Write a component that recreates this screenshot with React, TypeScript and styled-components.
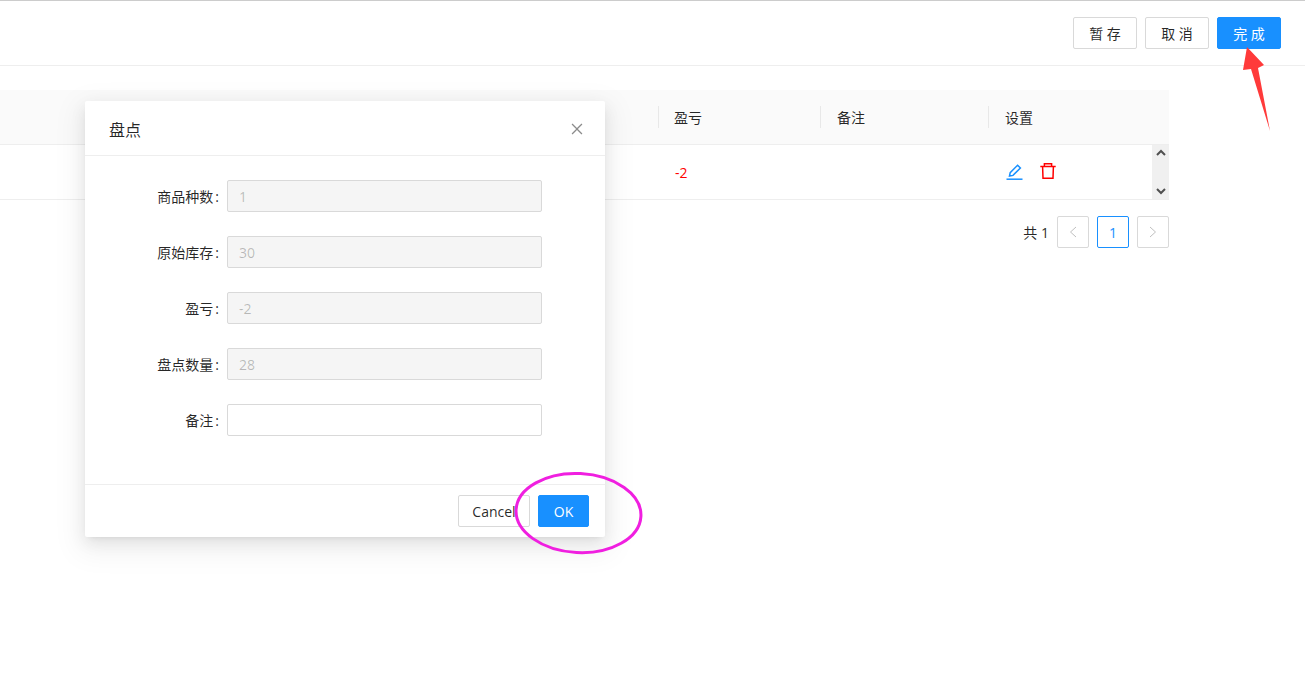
import React from 'react';
import styled, { createGlobalStyle } from 'styled-components';
import { AiOutlineClose } from 'react-icons/ai';

const GlobalStyle = createGlobalStyle`
  html, body {
    margin: 0;
    padding: 0;
    height: 100%;
    background: #fff;
    overflow: hidden;
  }
  body {
    font-family: "Open Sans", "Noto Sans CJK SC", sans-serif;
    font-size: 14px;
    color: rgba(0, 0, 0, 0.85);
  }
  * {
    box-sizing: border-box;
  }
`;

const Page = styled.div`
  position: relative;
  width: 1305px;
  height: 692px;
  overflow: hidden;
  border-top: 1px solid #ccc;
`;

const TopBar = styled.div`
  display: flex;
  justify-content: flex-end;
  gap: 8px;
  height: 65px;
  padding: 16px 24px 0 0;
  border-bottom: 1px solid #eee;
`;

const Button = styled.button<{ $primary?: boolean; $wide?: number }>`
  width: ${(p) => p.$wide || 64}px;
  height: 32px;
  padding: 0;
  font: inherit;
  border-radius: 2px;
  border: 1px solid ${(p) => (p.$primary ? '#1890ff' : '#d9d9d9')};
  background: ${(p) => (p.$primary ? '#1890ff' : '#fff')};
  color: ${(p) => (p.$primary ? '#fff' : 'rgba(0, 0, 0, 0.85)')};
`;

const Content = styled.div`
  width: 1169px;
  padding-top: 24px;
`;

const HeadRow = styled.div`
  display: grid;
  grid-template-columns: 658px 162px 168px 181px;
  height: 55px;
  align-items: center;
  background: #fafafa;
  border-bottom: 1px solid #eee;
`;

const HeadCell = styled.div<{ $plain?: boolean; $indent?: number }>`
  height: 22px;
  line-height: 24px;
  padding-left: ${(p) => p.$indent || 16}px;
  border-left: ${(p) => (p.$plain ? 'none' : '1px solid #e8e8e8')};
`;

const BodyRow = styled.div`
  display: grid;
  grid-template-columns: 659px 162px 168px 163px 17px;
  height: 55px;
  border-bottom: 1px solid #eee;
`;

const BodyCell = styled.div`
  display: flex;
  align-items: center;
  padding-left: 16px;
`;

const ActionIcons = styled.div`
  display: flex;
  align-items: center;
  gap: 17px;
  margin: 0 0 2px 1px;
`;

const LossText = styled.span`
  color: #f00;
  font-size: 14px;
`;

const ScrollTrack = styled.div`
  display: flex;
  flex-direction: column;
  justify-content: space-between;
  align-items: center;
  height: 54px;
  padding: 4px 0;
  background: #f0f0f0;
`;

const Pager = styled.div`
  display: flex;
  justify-content: flex-end;
  align-items: center;
  gap: 8px;
  margin-top: 16px;
`;

const PagerItem = styled.div<{ $active?: boolean }>`
  display: flex;
  align-items: center;
  justify-content: center;
  width: 32px;
  height: 32px;
  border-radius: 2px;
  border: 1px solid ${(p) => (p.$active ? '#1890ff' : '#d9d9d9')};
  color: ${(p) => (p.$active ? '#1890ff' : '#bfbfbf')};
  font-size: 14px;
`;

const Modal = styled.div`
  position: absolute;
  left: 85px;
  top: 100px;
  width: 520px;
  height: 436px;
  display: flex;
  flex-direction: column;
  background: #fff;
  border-radius: 2px;
  box-shadow: 0 3px 6px -4px rgba(0, 0, 0, 0.12), 0 6px 16px 0 rgba(0, 0, 0, 0.08),
    0 9px 28px 8px rgba(0, 0, 0, 0.05);
`;

const ModalHeader = styled.div`
  display: flex;
  justify-content: space-between;
  align-items: center;
  height: 55px;
  padding: 2px 20px 0 24px;
  border-bottom: 1px solid #eee;
  font-size: 16px;
`;

const CloseIcon = styled(AiOutlineClose)`
  width: 16px;
  height: 16px;
  color: #8c8c8c;
`;

const ModalBody = styled.div`
  flex: 1;
  display: flex;
  flex-direction: column;
  gap: 24px;
  padding-top: 24px;
`;

const FormRow = styled.div`
  display: flex;
  align-items: center;
  height: 32px;
`;

const FormLabel = styled.label`
  width: 142px;
  text-align: right;
  padding-right: 8px;
  &::after {
    content: ':';
    margin-left: 2px;
  }
`;

const FormInput = styled.input`
  width: 315px;
  height: 32px;
  padding: 0 11px;
  font: inherit;
  border-radius: 2px;
  border: 1px solid #d9d9d9;
  background: #fff;
  outline: none;
  &:disabled {
    background: #f5f5f5;
    color: rgba(0, 0, 0, 0.25);
  }
`;

const ModalFooter = styled.div`
  display: flex;
  justify-content: flex-end;
  gap: 8px;
  height: 53px;
  padding: 10px 16px 0 0;
  border-top: 1px solid #eee;
`;

const Annotations = styled.svg`
  position: absolute;
  left: 0;
  top: -1px;
  pointer-events: none;
`;

const fields = [
  { label: '商品种数', value: '1' },
  { label: '原始库存', value: '30' },
  { label: '盈亏', value: '-2' },
  { label: '盘点数量', value: '28' },
];

export default function App() {
  return (
    <Page>
      <GlobalStyle />
      <TopBar>
        <Button>暂 存</Button>
        <Button>取 消</Button>
        <Button $primary>完 成</Button>
      </TopBar>
      <Content>
        <HeadRow>
          <HeadCell $plain />
          <HeadCell $indent={15}>盈亏</HeadCell>
          <HeadCell>备注</HeadCell>
          <HeadCell>设置</HeadCell>
        </HeadRow>
        <BodyRow>
          <BodyCell />
          <BodyCell>
            <LossText>-2</LossText>
          </BodyCell>
          <BodyCell />
          <BodyCell>
            <ActionIcons>
              <svg width="17" height="17" viewBox="0 0 17 17" fill="none" stroke="#1890ff" strokeWidth="1.5">
                <path d="M3.5 13L4.2 9.6L11.6 2.2L14.4 5L7 12.4Z" />
                <path d="M0.5 16.2H16.5" />
              </svg>
              <svg width="16" height="16" viewBox="0 0 16 16" fill="none" stroke="#f00" strokeWidth="1.5">
                <path d="M0.3 3.4H15.7M4.4 3.2V0.8H11.6V3.2M2.6 3.4L3 15.2H13L13.4 3.4" />
              </svg>
            </ActionIcons>
          </BodyCell>
          <ScrollTrack>
            <svg width="10" height="7" viewBox="0 0 10 7" fill="none" stroke="#505050" strokeWidth="2">
              <path d="M1 6L5 2L9 6" />
            </svg>
            <svg width="10" height="7" viewBox="0 0 10 7" fill="none" stroke="#505050" strokeWidth="2">
              <path d="M1 1L5 5L9 1" />
            </svg>
          </ScrollTrack>
        </BodyRow>
        <Pager>
          <span>共 1</span>
          <PagerItem>
            <svg width="8" height="12" viewBox="0 0 8 12" fill="none" stroke="currentColor" strokeWidth="1">
              <path d="M7 1L1.5 6L7 11" />
            </svg>
          </PagerItem>
          <PagerItem $active>1</PagerItem>
          <PagerItem>
            <svg width="8" height="12" viewBox="0 0 8 12" fill="none" stroke="currentColor" strokeWidth="1">
              <path d="M1 1L6.5 6L1 11" />
            </svg>
          </PagerItem>
        </Pager>
      </Content>

      <Modal>
        <ModalHeader>
          盘点
          <CloseIcon />
        </ModalHeader>
        <ModalBody>
          {fields.map((f) => (
            <FormRow key={f.label}>
              <FormLabel>{f.label}</FormLabel>
              <FormInput disabled value={f.value} readOnly />
            </FormRow>
          ))}
          <FormRow>
            <FormLabel>备注</FormLabel>
            <FormInput />
          </FormRow>
        </ModalBody>
        <ModalFooter>
          <Button $wide={72}>Cancel</Button>
          <Button $primary $wide={51}>OK</Button>
        </ModalFooter>
      </Modal>

      <Annotations width="1305" height="692" viewBox="0 0 1305 692">
        <ellipse
          cx="578.5"
          cy="513"
          rx="62.5"
          ry="39.5"
          fill="none"
          stroke="#f01fe0"
          strokeWidth="3"
          transform="rotate(3 578 513)"
        />
        <polygon
          points="1247,47 1264,65 1258,68 1270,131 1251,69 1243,70"
          fill="#ff3a3a"
        />
      </Annotations>
    </Page>
  );
}
